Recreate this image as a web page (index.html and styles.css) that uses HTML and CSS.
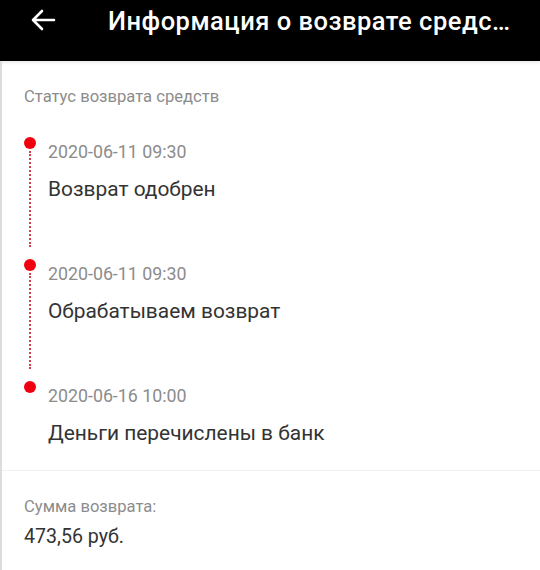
FILE: index.html
```html
<!DOCTYPE html>
<html lang="ru">
<head>
  <meta charset="UTF-8" />
  <meta name="viewport" content="width=device-width, initial-scale=1.0"/>
  <title>Информация о возврате средств</title>
  <link rel="stylesheet" href="styles.css">
</head>
<body>
  <header class="topbar">
    <svg class="back" width="26" height="22" viewBox="0 0 26 22">
      <path d="M24 11H3M12 2L3 11l9 9" fill="none" stroke="#fff" stroke-width="2.6" stroke-linecap="round" stroke-linejoin="round"/>
    </svg>
    <h1 class="title">Информация о возврате средств</h1>
  </header>

  <main class="page">
    <section class="status">
      <div class="label">Статус возврата средств</div>

      <div class="timeline">
        <div class="step">
          <div class="marker"><span class="dot"></span><span class="line"></span></div>
          <div class="info">
            <div class="date">2020-06-11 09:30</div>
            <div class="text">Возврат одобрен</div>
          </div>
        </div>
        <div class="step">
          <div class="marker"><span class="dot"></span><span class="line"></span></div>
          <div class="info">
            <div class="date">2020-06-11 09:30</div>
            <div class="text">Обрабатываем возврат</div>
          </div>
        </div>
        <div class="step last">
          <div class="marker"><span class="dot"></span></div>
          <div class="info">
            <div class="date">2020-06-16 10:00</div>
            <div class="text">Деньги перечислены в банк</div>
          </div>
        </div>
      </div>
    </section>

    <section class="amount">
      <div class="label">Сумма возврата:</div>
      <div class="sum">473,56 руб.</div>
    </section>
  </main>
</body>
</html>
```

FILE: styles.css
```css
body {
  margin: 0;
  font-family: Roboto, 'Noto Sans', sans-serif;
  background: #fff;
  height: 570px;
  display: flex;
  flex-direction: column;
  overflow: hidden;
}

.topbar {
  height: 61px;
  background: #000;
  display: flex;
  align-items: center;
  padding: 0 24px 20px 30px;
  box-shadow: 0 1px 4px rgba(0, 0, 0, 0.12);
  flex-shrink: 0;
  box-sizing: border-box;
}

.back {
  flex-shrink: 0;
  margin-top: -1px;
}

.title {
  margin: 0 0 0 52px;
  color: #fff;
  font-size: 25.5px;
  font-weight: 500;
  letter-spacing: 0.5px;
  white-space: nowrap;
  overflow: hidden;
  text-overflow: ellipsis;
}

.page {
  flex: 1;
  border-left: 2px solid #dcdcdc;
}

.status {
  padding: 26px 0 25px 22px;
  border-bottom: 1px solid #f0f0f0;
}

.label {
  font-size: 16.6px;
  line-height: 20px;
  color: #8c8c8c;
}

.timeline {
  margin-top: 30px;
}

.step {
  display: flex;
  gap: 12px;
  min-height: 122px;
}

.step.last {
  min-height: 0;
}

.marker {
  width: 12px;
  display: flex;
  flex-direction: column;
  align-items: center;
}

.dot {
  width: 12px;
  height: 12px;
  border-radius: 50%;
  background: #f0000f;
}

.line {
  flex: 1;
  border-left: 2px dotted #d04048;
  margin: 2px 0 12px;
}

.info {
  padding-top: 5px;
}

.date {
  font-size: 17.8px;
  line-height: 20px;
  color: #8c8c8c;
}

.text {
  margin-top: 15px;
  font-size: 20.9px;
  line-height: 24px;
  color: #333;
}

.amount {
  padding: 26px 0 0 22px;
}

.sum {
  margin-top: 8px;
  font-size: 19.6px;
  line-height: 24px;
  color: #333;
}
```
